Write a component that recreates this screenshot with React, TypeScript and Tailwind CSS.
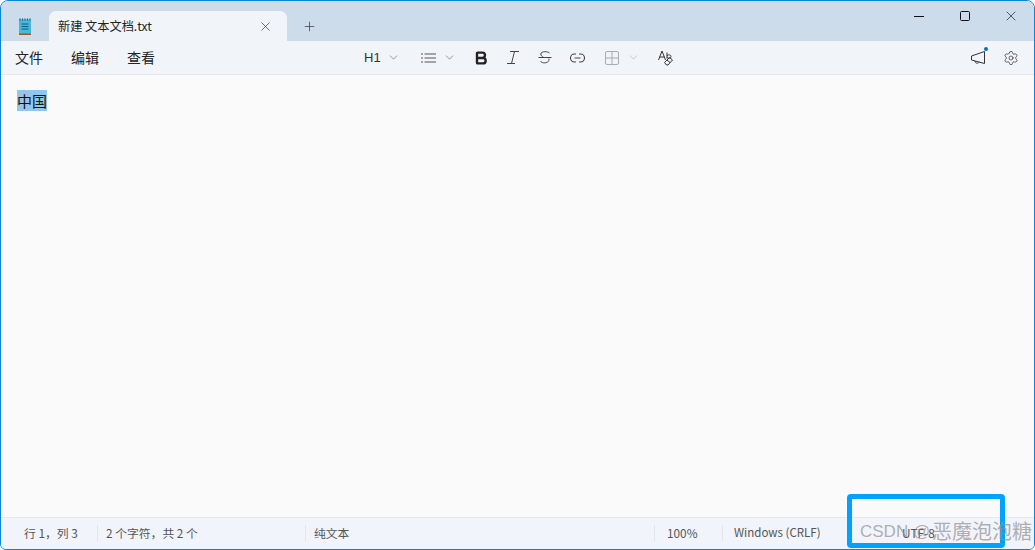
import { Bold, ChevronDown, Plus, Settings, X } from 'lucide-react';

const cjk = '"Noto Sans CJK SC", sans-serif';

function NotepadIcon() {
  return (
    <svg width="14" height="18" viewBox="0 0 14 18">
      <rect x="1" y="1.5" width="12" height="15" rx="0.5" fill="#45b8dc" />
      <rect x="1" y="15.5" width="12" height="1.5" fill="#a0562c" />
      <path d="M2 0.5v2M4.5 0.5v2M7 0.5v2M9.5 0.5v2M12 0.5v2" stroke="#1d5f83" strokeWidth="1.2" />
      <path d="M3.5 6h7M3.5 8.5h7M3.5 11h7" stroke="#1b5a7c" strokeWidth="1" />
    </svg>
  );
}

function ListIcon() {
  return (
    <svg width="15" height="12" viewBox="0 0 15 12" stroke="#555" strokeWidth="1.2">
      <path d="M0 2h2M0 6h2M0 10h2" />
      <path d="M3.5 2H15M3.5 6H15M3.5 10H15" />
    </svg>
  );
}

function ItalicIcon() {
  return (
    <svg width="14" height="15" viewBox="0 0 14 15" fill="none" stroke="#444" strokeWidth="1">
      <path d="M4 1.5h9M8.5 1.5 5.5 13.5M1 13.5h8" />
    </svg>
  );
}

function StrikeIcon() {
  return (
    <svg width="14" height="15" viewBox="0 0 14 15" fill="none" stroke="#444" strokeWidth="1">
      <path d="M11.5 3C10.5 1.5 3 .7 2.8 4c-.1 1.5 1.2 2.5 3 3.5" />
      <path d="M0.5 7.5h13" />
      <path d="M10.8 8.5c1 3-2 4.7-5.3 4.3-1.5-.2-2.5-.8-3-1.8" />
    </svg>
  );
}

function LinkIcon() {
  return (
    <svg width="15" height="10" viewBox="0 0 15 10" fill="none" stroke="#444" strokeWidth="1.1">
      <path d="M6 1H4.5a4 4 0 0 0 0 8H6M9 1h1.5a4 4 0 0 1 0 8H9M4.5 5h6" />
    </svg>
  );
}

function TableIcon() {
  return (
    <svg width="14" height="14" viewBox="0 0 14 14" fill="none" stroke="#a8acb0" strokeWidth="1">
      <rect x="0.5" y="0.5" width="13" height="13" rx="1.5" />
      <path d="M7 0.5v13M0.5 7h13" />
    </svg>
  );
}

function SpellIcon() {
  return (
    <svg width="15" height="16" viewBox="0 0 15 16" fill="none" stroke="#333" strokeWidth="1">
      <path d="M0.5 10 4 1 7.5 10M1.7 7h4.6" />
      <path d="M9 2.5V8.5M9 6c.5-1.5 4-1.7 4 .5s-3.5 2-4 .5" />
      <path d="m6.5 12.5 5-5 3 2.5-4.500 5H8.5z" />
      <path d="m9 10 3 2.5" />
    </svg>
  );
}

function MegaphoneIcon() {
  return (
    <svg width="16" height="16" viewBox="0 0 16 16" fill="none" stroke="#333" strokeWidth="1">
      <path d="M14.5 1.5v12L1.5 10V6z" strokeLinejoin="round" />
      <path d="M5 11c0 2.5 3.5 3 4 .8" />
    </svg>
  );
}

function StatusCell({ text, width }: { text: string; width: string }) {
  return <div className={`flex h-[16px] items-center border-l border-[#e2e5ea] ${width}`}>{text}</div>;
}

export default function App() {
  return (
    <div
      className="relative flex h-[550px] w-[1035px] flex-col overflow-hidden rounded-t-[8px] rounded-b-[6px] border border-[#0a84d8] bg-[#fafafa] text-[#1b1b1b]"
      style={{ fontFamily: cjk }}
    >
      {/* title bar */}
      <div className="flex h-[40px] shrink-0 items-end bg-[#cddceb]">
        <div className="flex h-[40px] w-[48px] items-center justify-center pt-[11px]">
          <NotepadIcon />
        </div>
        <div className="flex h-[30px] w-[238px] items-center justify-between rounded-t-[7px] bg-[#f1f5fa] pl-[9px] pr-[14px]">
          <span className="text-[12.2px] text-[#1f1f1f]">新建 文本文档.txt</span>
          <X size={15} strokeWidth={1.1} className="text-[#333]" />
        </div>
        <div className="flex h-[30px] w-[44px] items-center justify-center">
          <Plus size={15} strokeWidth={1.1} className="text-[#333]" />
        </div>
        <div className="flex-1" />
        <div className="flex items-start self-start pt-[9px]">
          <div className="flex h-[12px] w-[46px] items-center justify-center">
            <div className="h-[1px] w-[10px] bg-[#111]" />
          </div>
          <div className="flex h-[12px] w-[46px] items-center justify-center">
            <div className="h-[10px] w-[10px] rounded-[1.5px] border border-[#111]" />
          </div>
          <div className="flex h-[12px] w-[46px] items-center justify-center pr-[1px]">
            <X size={16} strokeWidth={1} className="text-[#111]" />
          </div>
        </div>
      </div>

      {/* menu + toolbar */}
      <div className="flex h-[34px] shrink-0 items-center border-b border-[#e5e8ec] bg-[#f1f5fa] text-[#222]">
        <div className="flex w-[350px] gap-[28px] pl-[14px] text-[14px]">
          <span>文件</span>
          <span>编辑</span>
          <span>查看</span>
        </div>
        <div className="flex items-center text-[#555]">
          <span className="ml-[13px] text-[13px] text-[#333]" style={{ fontFamily: '"Liberation Sans", sans-serif' }}>H1</span>
          <ChevronDown size={13} strokeWidth={1.1} className="ml-[6px]" />
          <div className="ml-[21px]"><ListIcon /></div>
          <ChevronDown size={13} strokeWidth={1.1} className="ml-[7px]" />
          <Bold size={16} strokeWidth={3.6} className="ml-[17px] text-[#222]" />
          <div className="ml-[17px]"><ItalicIcon /></div>
          <div className="ml-[18px]"><StrikeIcon /></div>
          <div className="ml-[18px]"><LinkIcon /></div>
          <div className="ml-[20px]"><TableIcon /></div>
          <ChevronDown size={13} strokeWidth={1.1} className="ml-[8px] text-[#a8acb0]" />
          <div className="ml-[18px]">
            <SpellIcon />
          </div>
        </div>
        <div className="flex-1" />
        <div className="relative mr-[17px]">
          <MegaphoneIcon />
          <span className="absolute -right-[2px] -top-[3px] h-[4px] w-[4px] rounded-full bg-[#0f6cbd]" />
        </div>
        <Settings size={16} strokeWidth={1.1} className="mr-[15px] text-[#333]" />
      </div>

      {/* editor */}
      <div className="flex-1 pl-[16px] pt-[16px] text-[15px] leading-[20px] text-[#111]">
        <span className="bg-[#94c6ec]">中国</span>
      </div>

      {/* status bar */}
      <div className="flex h-[32px] shrink-0 items-center border-t border-[#e5e8ec] bg-[#f1f4fa] pb-[1px] text-[11.8px] text-[#555]">
        <div className="w-[23px]" />
        <div className="w-[73px]">行 1，列 3</div>
        <StatusCell text="2 个字符，共 2 个" width="w-[208px] pl-[8px]" />
        <StatusCell text="纯文本" width="w-[349px] pl-[8px]" />
        <StatusCell text="100%" width="w-[68px] pl-[12px]" />
        <StatusCell text="Windows (CRLF)" width="w-[180px] pl-[11px] !text-[11.5px]" />
        <span>UTF-8</span>
      </div>

      {/* annotation box and watermark over the shot */}
      <div className="pointer-events-none absolute left-[846px] top-[493px] h-[54px] w-[158px] rounded-[4px] border-[5px] border-[#00a2ff]" />
      <div
        className="pointer-events-none absolute left-[859px] top-[518px] flex items-center whitespace-nowrap leading-[26px] text-[#8f8f8f]/70"
        style={{ fontFamily: '"Liberation Sans", "Noto Sans CJK SC", sans-serif' }}
      >
        <span className="w-[72px] text-[17px]">CSDN @</span>
        <span className="text-[20px]">恶魔泡泡糖</span>
      </div>
    </div>
  );
}
